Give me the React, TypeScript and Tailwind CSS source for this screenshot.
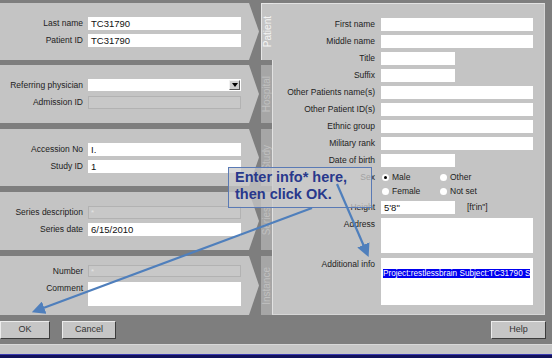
import type { ReactNode } from 'react'

const font = { fontFamily: '"Liberation Sans", Arial, sans-serif' }

function LeftRow({ label, children }: { label: string; children: ReactNode }) {
  return (
    <div className="flex items-start gap-[5px]">
      <span className="w-[83px] text-right text-[8.5px] leading-[13px] text-[#222] whitespace-nowrap">{label}</span>
      {children}
    </div>
  )
}

function RightRow({ label, children }: { label: string; children: ReactNode }) {
  return (
    <div className="flex items-start gap-[6px]">
      <span className="w-[102px] text-right text-[8.5px] leading-[13px] text-[#222] whitespace-nowrap">{label}</span>
      {children}
    </div>
  )
}

function Field({ value = '', w = 'w-[153px]', h = 'h-[13px]' }: { value?: string; w?: string; h?: string }) {
  return <div className={`${w} ${h} bg-white px-[3px] text-[9.5px] leading-[13px] text-[#111]`}>{value}</div>
}

function Disabled({ value = '', h = 'h-[13px]' }: { value?: string; h?: string }) {
  return (
    <div className={`w-[153px] ${h} bg-[#c8c8c8] border border-[#b2b2b2] px-[2px] text-[8px] leading-[11px] text-[#e4e4e4]`}>
      {value}
    </div>
  )
}

function Radio({ label, checked = false }: { label: string; checked?: boolean }) {
  return (
    <div className="flex items-center gap-[3px] w-[58px] h-[12px]">
      <span className="ml-[1px] w-[7px] h-[7px] rounded-full bg-white flex items-center justify-center">
        {checked && <span className="w-[3px] h-[3px] rounded-full bg-black" />}
      </span>
      <span className="text-[8.5px] leading-[12px] text-[#222]">{label}</span>
    </div>
  )
}

function Panel({ cls, children }: { cls: string; children: ReactNode }) {
  return (
    <div
      className={`${cls} w-[259px] bg-[#c4c4c4] flex flex-col justify-center gap-[4px] [clip-path:polygon(0_0,249px_0,259px_50%,249px_100%,0_100%)]`}
    >
      {children}
    </div>
  )
}

function Tab({ cls, label, active = false }: { cls: string; label: string; active?: boolean }) {
  return (
    <div
      className={`${cls} flex items-center justify-center ${
        active
          ? 'w-[12px] bg-[#c4c4c4] border-l border-t border-[#e6e6e6] text-[#f4f4f4] relative z-10 -mr-px'
          : 'w-[11px] bg-[#a6a6a6] text-[#c0c0c0]'
      }`}
    >
      <span className="[writing-mode:vertical-rl] rotate-180 text-[10px] leading-[11px] whitespace-nowrap">{label}</span>
    </div>
  )
}

function Button({ label, w }: { label: string; w: string }) {
  return (
    <div
      className={`${w} h-[18px] bg-[#c6c6c6] border border-t-[#ececec] border-l-[#ececec] border-r-[#3c3c3c] border-b-[#3c3c3c] flex items-center justify-center text-[9px] text-[#333]`}
    >
      {label}
    </div>
  )
}

export default function App() {
  return (
    <div className="relative w-[552px] h-[358px] overflow-hidden bg-[#7e7e7e]" style={font}>
      <div className="flex pt-[3px] h-[315px]">
        {/* left stacked sections */}
        <div className="flex flex-col">
          <Panel cls="h-[57px]">
            <LeftRow label="Last name"><Field value="TC31790" /></LeftRow>
            <LeftRow label="Patient ID"><Field value="TC31790" /></LeftRow>
          </Panel>
          <Panel cls="h-[58px] mt-[5px]">
            <LeftRow label="Referring physician">
              <div className="w-[153px] h-[12px] bg-white flex justify-end items-center pr-[1px]">
                <div className="w-[11px] h-[10px] bg-[#cfcfcf] border border-t-[#f2f2f2] border-l-[#f2f2f2] border-r-[#555] border-b-[#555] flex items-center justify-center">
                  <svg width="6" height="4" viewBox="0 0 6 4"><path d="M0 0h6L3 4z" fill="#000" /></svg>
                </div>
              </div>
            </LeftRow>
            <LeftRow label="Admission ID"><Disabled /></LeftRow>
          </Panel>
          <Panel cls="h-[57px] mt-[6px]">
            <LeftRow label="Accession No"><Field value="I." /></LeftRow>
            <LeftRow label="Study ID"><Field value="1" /></LeftRow>
          </Panel>
          <Panel cls="h-[58px] mt-[6px]">
            <LeftRow label="Series description"><Disabled value="*" /></LeftRow>
            <LeftRow label="Series date"><Field value="6/15/2010" /></LeftRow>
          </Panel>
          <Panel cls="h-[59px] mt-[6px]">
            <LeftRow label="Number"><Disabled value="*" h="h-[12px]" /></LeftRow>
            <LeftRow label="Comment"><Field h="h-[24px]" /></LeftRow>
          </Panel>
        </div>

        {/* vertical tabs */}
        <div className="flex flex-col ml-[2px]">
          <Tab cls="h-[57px]" label="Patient" active />
          <Tab cls="h-[58px] mt-[5px]" label="Hospital" />
          <Tab cls="h-[57px] mt-[6px]" label="Study" />
          <Tab cls="h-[58px] mt-[6px]" label="Series" />
          <Tab cls="h-[59px] mt-[6px]" label="Instance" />
        </div>

        {/* patient details */}
        <div className="w-[273px] h-[312px] bg-[#c4c4c4] border border-[#e2e2e2] border-r-[#d6d6d6] border-b-[#d6d6d6] pt-[14px] flex flex-col gap-[4px]">
          <RightRow label="First name"><Field w="w-[152px]" /></RightRow>
          <RightRow label="Middle name"><Field w="w-[152px]" /></RightRow>
          <RightRow label="Title"><Field w="w-[74px]" /></RightRow>
          <RightRow label="Suffix"><Field w="w-[74px]" /></RightRow>
          <RightRow label="Other Patients name(s)"><Field w="w-[152px]" /></RightRow>
          <RightRow label="Other Patient ID(s)"><Field w="w-[152px]" /></RightRow>
          <RightRow label="Ethnic group"><Field w="w-[152px]" /></RightRow>
          <RightRow label="Military rank"><Field w="w-[152px]" /></RightRow>
          <RightRow label="Date of birth"><Field w="w-[74px]" /></RightRow>
          <div className="flex items-start gap-[6px]">
            <span className="w-[102px] text-right text-[8.5px] leading-[12px] text-[#222]">Sex</span>
            <div className="flex flex-col gap-[2px]">
              <div className="flex">
                <Radio label="Male" checked />
                <Radio label="Other" />
              </div>
              <div className="flex">
                <Radio label="Female" />
                <Radio label="Not set" />
              </div>
            </div>
          </div>
          <RightRow label="Height">
            <div className="flex items-start gap-[12px]">
              <Field w="w-[74px]" value={'5\'8"'} />
              <span className="text-[8.5px] leading-[13px] text-[#222]">[ft'in"]</span>
            </div>
          </RightRow>
          <RightRow label="Address"><Field w="w-[152px]" h="h-[35px]" /></RightRow>
          <div className="mt-[1px]">
            <RightRow label="Additional info">
              <div className="w-[152px] h-[47px] bg-white overflow-hidden whitespace-nowrap pl-[2px] pt-[1px]">
                <span className="bg-[#0000f0] text-white text-[8.2px] leading-[9px] inline-block">
                  Project:restlessbrain Subject:TC31790 S
                </span>
              </div>
            </RightRow>
          </div>
        </div>
      </div>

      {/* buttons */}
      <div className="flex items-start pt-[6px] h-[29px]">
        <Button label="OK" w="w-[50px]" />
        <div className="ml-[12px]"><Button label="Cancel" w="w-[54px]" /></div>
        <div className="ml-auto mr-[6px]"><Button label="Help" w="w-[55px]" /></div>
      </div>
      <div className="h-[10px] bg-[#c6c6c6] border-t border-[#d8d8d8]" />
      <div className="h-[4px] bg-[#12125a] border-t border-[#3a3ab0]" />

      {/* annotation callout */}
      <div className="absolute left-[228px] top-[167px] w-[144px] h-[41px] border border-[#5a7ab5] bg-[#cbcbcb]/75 pl-[6px] pt-[1px]">
        <p className="text-[14.5px] leading-[17px] font-bold text-[#28388c] whitespace-nowrap">
          Enter info* here,
          <br />
          then click OK.
        </p>
      </div>
      <svg className="absolute inset-0 pointer-events-none" width="552" height="358" viewBox="0 0 552 358">
        <defs>
          <marker id="head" markerWidth="6" markerHeight="6" refX="3" refY="3" orient="auto" markerUnits="strokeWidth">
            <path d="M0 0L6 3L0 6z" fill="#4f7fbc" />
          </marker>
        </defs>
        <line x1="312" y1="208" x2="38" y2="310" stroke="#4f7fbc" strokeWidth="2.2" markerEnd="url(#head)" />
        <line x1="337" y1="184" x2="366" y2="251" stroke="#4f7fbc" strokeWidth="2.2" markerEnd="url(#head)" />
      </svg>
    </div>
  )
}
